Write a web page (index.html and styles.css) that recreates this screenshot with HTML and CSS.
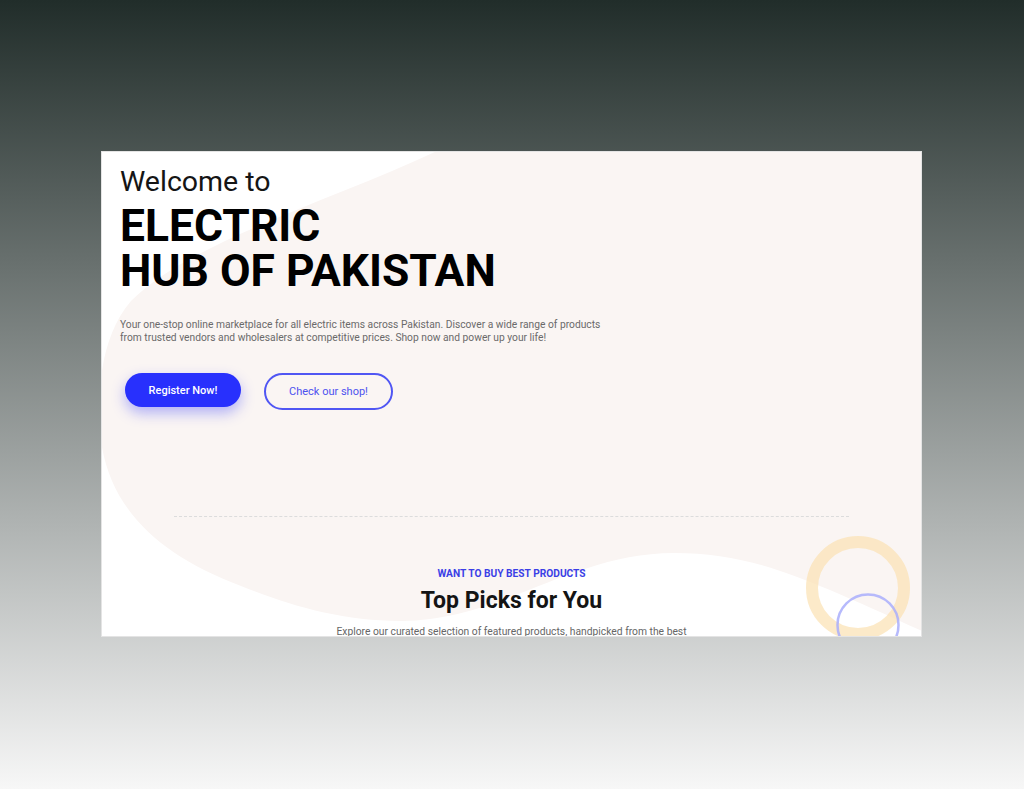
FILE: index.html
```html
<!DOCTYPE html>
<html lang="en">
<head>
<meta charset="utf-8">
<title>Electric Hub of Pakistan</title>
<link rel="stylesheet" href="styles.css">
</head>
<body>
<div class="stage">
  <div class="card">
    <svg class="decor" viewBox="0 0 821 486" width="821" height="486" aria-hidden="true">
      <path class="blob" d="M336 0 C230 50 90 90 30 150 C0 185 -5 240 0 290 C10 360 60 405 140 435 C190 455 240 470 300 470 C400 470 470 402 573 402 C650 402 700 425 821 480 L821 0 Z"/>
      <circle class="ring-yellow" cx="757" cy="437" r="46"/>
      <circle class="ring-blue" cx="767" cy="474" r="30.5"/>
    </svg>
    <section class="hero">
      <div class="welcome">Welcome to</div>
      <h1 class="title">ELECTRIC<br>HUB OF PAKISTAN</h1>
      <p class="lead">Your one-stop online marketplace for all electric items across Pakistan. Discover a wide range of products from trusted vendors and wholesalers at competitive prices. Shop now and power up your life!</p>
      <div class="actions">
        <a class="btn btn-primary" href="#">Register Now!</a>
        <a class="btn btn-outline" href="#">Check our shop!</a>
      </div>
    </section>
    <hr class="divider">
    <section class="picks">
      <div class="eyebrow">WANT TO BUY BEST PRODUCTS</div>
      <h2 class="picks-title">Top Picks for You</h2>
      <p class="picks-text">Explore our curated selection of featured products, handpicked from the best vendors and wholesalers across Pakistan.</p>
    </section>
  </div>
</div>
</body>
</html>
```
FILE: styles.css
```css
* { box-sizing: border-box; }
html, body { margin: 0; padding: 0; }
body {
  width: 1024px;
  height: 789px;
  overflow: hidden;
  background: linear-gradient(180deg, #212d2a 0%, #f7f7f7 100%);
  font-family: Roboto, "Liberation Sans", Arial, sans-serif;
}
.stage {
  padding: 151px 0 0 101px;
}
.card {
  position: relative;
  width: 821px;
  height: 486px;
  overflow: hidden;
  background: #ffffff;
  border: 1px solid #e4e4e4;
}
.decor {
  position: absolute;
  top: -1px;
  left: -1px;
  z-index: 0;
}
.blob { fill: #faf5f3; }
.ring-yellow { fill: none; stroke: #fbe2b4; stroke-opacity: 0.72; stroke-width: 12; }
.ring-blue { fill: none; stroke: #a9aefb; stroke-opacity: 0.85; stroke-width: 2.5; }
.hero {
  position: relative;
  z-index: 1;
  padding: 13px 0 0 18px;
}
.welcome {
  font-size: 28.5px;
  line-height: 34px;
  font-weight: 400;
  color: #151515;
}
.title {
  margin: 5px 0 0;
  font-size: 44.4px;
  line-height: 45px;
  font-weight: 700;
  color: #000;
}
.lead {
  margin: 25px 0 0;
  width: 500px;
  font-size: 10.25px;
  line-height: 12.5px;
  color: #6a6a6a;
}
.actions {
  display: flex;
  align-items: flex-start;
  gap: 23px;
  margin: 29px 0 0 5px;
}
.btn {
  display: flex;
  align-items: center;
  justify-content: center;
  text-decoration: none;
  font-size: 11px;
  border-radius: 20px;
}
.btn-primary {
  width: 116px;
  height: 34px;
  background: #2830fd;
  color: #fff;
  font-weight: 500;
  box-shadow: 0 6px 14px rgba(40, 48, 253, 0.35);
}
.btn-outline {
  width: 129px;
  height: 37px;
  border: 2px solid #5056f3;
  color: #4d52ef;
  font-weight: 400;
}
.divider {
  position: relative;
  z-index: 1;
  width: 675px;
  margin: 106px auto 0;
  border: 0;
  border-top: 1px dashed #dcdcdc;
  height: 0;
}
.picks {
  position: relative;
  z-index: 1;
  margin-top: 51px;
  text-align: center;
}
.eyebrow {
  font-size: 10.2px;
  line-height: 12px;
  font-weight: 700;
  color: #3b3fe6;
}
.picks-title {
  margin: 7px 0 0;
  font-size: 23px;
  line-height: 28px;
  font-weight: 700;
  color: #141414;
}
.picks-text {
  margin: 10px auto 0;
  width: 360px;
  font-size: 10.3px;
  line-height: 13px;
  color: #666;
}
```
